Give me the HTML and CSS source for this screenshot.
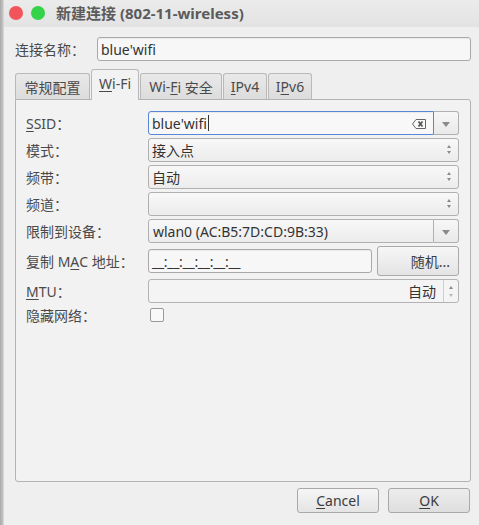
FILE: index.html
```html
<!DOCTYPE html>
<html>
<head>
<meta charset="utf-8">
<link rel="stylesheet" href="styles.css">
</head>
<body>
<div class="screen">
  <div class="strip"></div>
  <div class="dialog">
    <div class="titlebar">
      <span class="dot red"></span>
      <span class="dot green"></span>
      <span class="title">新建连接 (802-11-wireless)</span>
    </div>
    <div class="content">
      <div class="namerow">
        <span class="namelabel">连接名称：</span>
        <div class="entry nameentry">blue'wifi</div>
      </div>
      <div class="tabs">
        <div class="tab t1">常规配置</div>
        <div class="tab active t2"><u>W</u>i-Fi</div>
        <div class="tab t3">Wi-<u>F</u>i 安全</div>
        <div class="tab t4"><u>I</u>Pv4</div>
        <div class="tab t5">I<u>P</u>v6</div>
      </div>
      <div class="panel">
        <div class="form">
          <div class="lbl"><u>S</u>SID：</div>
          <div class="ctl ssid">
            <div class="entry focus">blue'wifi<span class="caret"></span>
              <svg class="clear" width="14" height="10" viewBox="0 0 14 10"><path d="M4 0.5 H13.5 V9.5 H4 L0.5 5 Z" fill="none" stroke="#666" stroke-width="1"/><path d="M6.5 2.5 L10.5 7.5 M10.5 2.5 L6.5 7.5" stroke="#555" stroke-width="1.8"/></svg>
            </div>
            <div class="dropbtn"><span class="tri"></span></div>
          </div>

          <div class="lbl">模式：</div>
          <div class="ctl combo">接入点<span class="spin"><i class="up"></i><i class="dn"></i></span></div>

          <div class="lbl">频带：</div>
          <div class="ctl combo">自动<span class="spin"><i class="up"></i><i class="dn"></i></span></div>

          <div class="lbl">频道：</div>
          <div class="ctl combo"><span class="spin"><i class="up"></i><i class="dn"></i></span></div>

          <div class="lbl">限制到设备：</div>
          <div class="ctl devcombo"><div class="devtext">wlan0 (AC:B5:7D:CD:9B:33)</div><div class="devbtn"><span class="tri"></span></div></div>

          <div class="lbl macl">复制 M<u>A</u>C 地址：</div>
          <div class="ctl macrow"><div class="entry mac">__:__:__:__:__:__</div><div class="btn rand">随机...</div></div>

          <div class="lbl"><u>M</u>TU：</div>
          <div class="ctl mtu"><div class="mtutext">自动</div><div class="mtuspin"><i class="up"></i><i class="dn"></i></div></div>

          <div class="lbl">隐藏网络：</div>
          <div class="ctl chk"><span class="box"></span></div>
        </div>
      </div>
      <div class="buttons">
        <div class="btn big"><u>C</u>ancel</div>
        <div class="btn big ok"><u>O</u>K</div>
      </div>
    </div>
  </div>
</div>
</body>
</html>
```

FILE: styles.css
```css
html, body {
  margin: 0;
  padding: 0;
  width: 479px;
  height: 525px;
  overflow: hidden;
  font-family: "Noto Sans", "Open Sans", "Noto Sans CJK SC", sans-serif;
  font-size: 14px;
  color: #3c3c3c;
}
.screen {
  display: flex;
  width: 479px;
  height: 525px;
}
.strip {
  width: 3px;
  background: linear-gradient(to right, #a9a9a9, #c4c4c4);
  border-right: 1px solid #d6d6d6;
}
.dialog {
  flex: 1;
  display: flex;
  flex-direction: column;
  background: #efefef;
}
.titlebar {
  height: 27px;
  display: flex;
  align-items: center;
  background: linear-gradient(#ebebeb, #e3e3e3);
  padding-left: 4px;
}
.dot {
  width: 14px;
  height: 14px;
  border-radius: 50%;
  margin-right: 8px;
  margin-top: -2px;
}
.red { background: #f2545b; margin-left: 1px; }
.green { background: #34d34a; }
.title {
  font-weight: bold;
  color: #5b5b5b;
  font-size: 15px;
  margin-left: 3px;
  margin-top: -2px;
}
.content {
  flex: 1;
  display: flex;
  flex-direction: column;
  padding: 10px 8px 0 11px;
}
.namerow {
  display: flex;
  align-items: center;
  height: 24px;
}
.namelabel {
  width: 82px;
  color: #4a4a4a;
  white-space: nowrap;
}
.entry {
  box-sizing: border-box;
  height: 24px;
  border: 1px solid #a9a9a9;
  border-radius: 3px;
  background: #f7f7f7;
  padding-left: 3px;
  display: flex;
  align-items: center;
  color: #333;
  box-shadow: inset 0 1px 1px rgba(0,0,0,0.06);
}
.nameentry {
  flex: 1;
}
.tabs {
  display: flex;
  align-items: flex-end;
  height: 30px;
  margin-top: 8px;
  position: relative;
  z-index: 2;
}
.tab {
  box-sizing: border-box;
  height: 26px;
  border: 1px solid #b9b9b9;
  border-bottom: none;
  border-radius: 3px 3px 0 0;
  background: linear-gradient(#e9e9e9, #dcdcdc);
  display: flex;
  align-items: center;
  justify-content: center;
  color: #4a4a4a;
  margin-right: 1px;
  white-space: nowrap;
}
.tab u { text-decoration-thickness: 1px; text-underline-offset: 2px; }
.t1 { width: 75px; }
.t2 { width: 48px; }
.t3 { width: 82px; }
.t4 { width: 44px; }
.t5 { width: 44px; }
.tab.active {
  height: 31px;
  background: #f2f2f2;
  margin-bottom: -1px;
  padding-bottom: 3px;
}
.panel {
  box-sizing: border-box;
  height: 383px;
  border: 1px solid #b3b3b3;
  border-radius: 0 3px 3px 3px;
  background: #f2f2f2;
  padding: 11px 11px 0 10px;
}
.form {
  display: grid;
  grid-template-columns: 122px 1fr;
  grid-template-rows: 24px 24px 24px 24px 24px 30px 24px 18px;
  row-gap: 3px;
}
.lbl {
  display: flex;
  align-items: center;
  color: #4a4a4a;
  white-space: nowrap;
}
.lbl u { text-decoration-thickness: 1px; text-underline-offset: 2px; }
.ctl {
  box-sizing: border-box;
  height: 24px;
}
.ssid {
  display: flex;
}
.ssid .entry {
  flex: 1;
  border-color: #5a86d6;
  border-radius: 3px 0 0 3px;
  background: #f8f8f8;
  position: relative;
}
.caret {
  display: inline-block;
  width: 1px;
  height: 16px;
  background: #333;
  margin-left: 1px;
}
.clear {
  position: absolute;
  right: 7px;
  top: 7px;
}
.dropbtn, .devbtn {
  box-sizing: border-box;
  width: 25px;
  height: 24px;
  border: 1px solid #b0b0b0;
  border-left: none;
  border-radius: 0 3px 3px 0;
  background: linear-gradient(#f7f7f7, #e9e9e9);
  display: flex;
  align-items: center;
  justify-content: center;
}
.tri {
  width: 0;
  height: 0;
  border-left: 4px solid transparent;
  border-right: 4px solid transparent;
  border-top: 5px solid #8a8a8a;
  margin-top: 2px;
}
.combo {
  border: 1px solid #b0b0b0;
  border-radius: 3px;
  background: linear-gradient(#f8f8f8, #ececec);
  display: flex;
  align-items: center;
  padding-left: 3px;
  position: relative;
  color: #333;
}
.spin {
  position: absolute;
  right: 7px;
  top: 6px;
  display: flex;
  flex-direction: column;
  gap: 3px;
}
.spin i, .mtuspin i {
  display: block;
  width: 0;
  height: 0;
  border-left: 2.5px solid transparent;
  border-right: 2.5px solid transparent;
}
.spin .up, .mtuspin .up { border-bottom: 3px solid #8a8a8a; }
.spin .dn, .mtuspin .dn { border-top: 3px solid #8a8a8a; }
.devcombo {
  display: flex;
}
.devtext {
  flex: 1;
  box-sizing: border-box;
  border: 1px solid #b0b0b0;
  border-radius: 3px 0 0 3px;
  background: linear-gradient(#f8f8f8, #ececec);
  display: flex;
  align-items: center;
  padding-left: 4px;
  color: #333;
}
.macrow {
  height: 30px;
  display: flex;
  align-items: center;
  gap: 5px;
}
.mac {
  flex: 1;
  letter-spacing: -0.3px;
}
.btn {
  box-sizing: border-box;
  border: 1px solid #a9a9a9;
  border-radius: 3px;
  background: linear-gradient(#f6f6f6, #e4e4e4);
  display: flex;
  align-items: center;
  justify-content: center;
  color: #3c3c3c;
}
.rand {
  width: 82px;
  height: 30px;
  justify-content: flex-end;
  padding-right: 8px;
}
.mtu {
  display: flex;
  border: 1px solid #b3b3b3;
  border-radius: 3px;
  background: #f4f4f4;
}
.mtutext {
  flex: 1;
  display: flex;
  align-items: center;
  justify-content: flex-end;
  padding-right: 7px;
  color: #333;
}
.mtuspin {
  width: 14px;
  border-left: 1px solid #d0d0d0;
  display: flex;
  flex-direction: column;
  align-items: center;
  justify-content: center;
  gap: 5px;
}
.mtuspin .dn { border-top-color: #b8b8b8; }
.chk {
  height: 18px;
  display: flex;
  align-items: center;
}
.box {
  box-sizing: border-box;
  width: 14px;
  height: 14px;
  border: 1px solid #999;
  border-radius: 2px;
  background: #f9f9f9;
  margin-left: 2px;
}
.buttons {
  display: flex;
  justify-content: flex-end;
  gap: 9px;
  margin-top: 6px;
  padding-right: 1px;
}
.big {
  width: 82px;
  height: 25px;
}
.big u { text-decoration-thickness: 1px; text-underline-offset: 2px; }
.ok {
  background: linear-gradient(#ededed, #dedede);
}
```
